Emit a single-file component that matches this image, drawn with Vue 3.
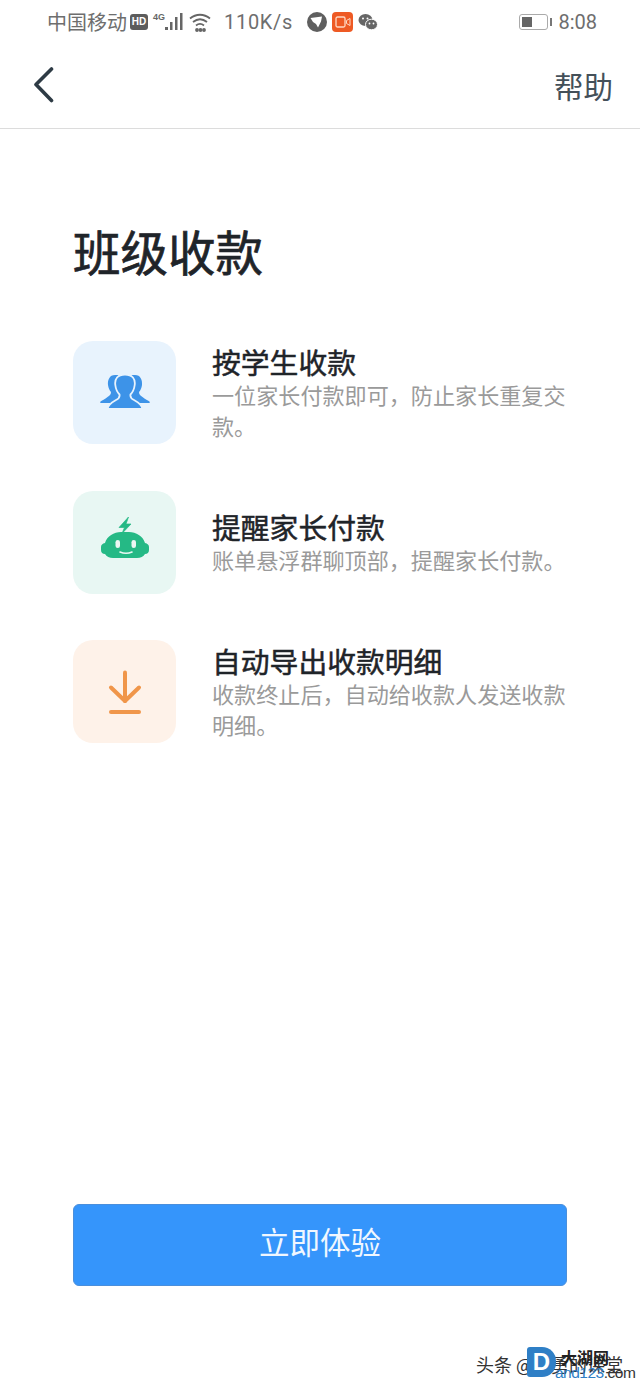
<script setup>
const items = [
  { key: 'blue', title: '按学生收款', desc: '一位家长付款即可，防止家长重复交款。' },
  { key: 'green', title: '提醒家长付款', desc: '账单悬浮群聊顶部，提醒家长付款。' },
  { key: 'orange', title: '自动导出收款明细', desc: '收款终止后，自动给收款人发送收款明细。' }
]
</script>

<template>
  <div class="page">
    <div class="status">
      <div class="status-left">
        <span class="carrier">中国移动</span>
        <span class="hd">HD</span>
        <span class="signal">
          <span class="net">4G</span>
          <svg width="22" height="20" viewBox="0 0 22 20"><g fill="#666"><rect x="0" y="15" width="3" height="3"/><rect x="5" y="10" width="2.500" height="8"/><rect x="10" y="5" width="2.500" height="13"/><rect x="15" y="1" width="2.500" height="17"/></g></svg>
        </span>
        <svg class="wifi" width="24" height="20" viewBox="0 0 24 20" fill="none" stroke="#666" stroke-width="1.800"><path d="M2 6.500C8 1.500 16 1.500 22 6.500"/><path d="M5 10C9.500 6.500 14.500 6.500 19 10"/><path d="M8 13.500C10.500 11.500 13.500 11.500 16 13.500"/><circle cx="9" cy="18" r="1" fill="#666"/><circle cx="12.500" cy="18" r="1" fill="#666"/><circle cx="16" cy="18" r="1" fill="#666"/></svg>
        <span class="speed">110K/s</span>
        <span class="apps">
          <svg width="20" height="20" viewBox="0 0 20 20"><circle cx="10" cy="10" r="10" fill="#5f5f5f"/><path d="M3.500 6L15 4.500L14 9.500L11 15.500L9 12L6 10Z" fill="#fff"/></svg>
          <svg width="21" height="20" viewBox="0 0 21 20"><rect width="21" height="20" rx="4" fill="#ee5a24"/><rect x="4" y="5" width="9" height="10" rx="1.500" fill="none" stroke="#ffd9c4" stroke-width="1.300"/><path d="M14.500 8.500L18 6.500V13.500L14.500 11.500Z" fill="none" stroke="#ffd9c4" stroke-width="1"/></svg>
          <svg width="20" height="18" viewBox="0 0 20 18"><ellipse cx="7.500" cy="7" rx="7" ry="6" fill="#666"/><ellipse cx="13.500" cy="11.500" rx="6" ry="5.300" fill="#666" stroke="#fff" stroke-width="1"/><circle cx="5" cy="5.500" r="1" fill="#fff"/><circle cx="9.500" cy="5.500" r="1" fill="#fff"/><circle cx="11.500" cy="10.500" r=".9" fill="#fff"/><circle cx="15.500" cy="10.500" r=".9" fill="#fff"/></svg>
        </span>
      </div>
      <div class="status-right">
        <span class="battery"><span class="battery-fill"></span></span>
        <span class="battery-tip"></span>
        <span class="time">8:08</span>
      </div>
    </div>

    <header class="nav">
      <svg width="22" height="36" viewBox="0 0 22 36" fill="none" stroke="#2e3b45" stroke-width="3.600" stroke-linecap="round" stroke-linejoin="round"><path d="M18.500 2L3 17.500L18.500 33.500"/></svg>
      <span class="help">帮助</span>
    </header>

    <main class="content">
      <h1 class="title">班级收款</h1>

      <ul class="list">
        <li v-for="item in items" :key="item.key" class="item">
          <div class="tile" :class="item.key">
            <svg v-if="item.key === 'blue'" width="50" height="38" viewBox="0 0 50 38">
              <path d="M15 1C9.500 1 7.500 6 8 11C8.500 14 9.500 16.500 11 18C11 20.500 9.500 21.500 7.500 23C5 25 2 26.500 0 28C0 28.700 .7 29 2 29H25V1Z" fill="#3d93e8"/>
              <path d="M35 1C40.500 1 42.500 6 42 11C41.500 14 40.500 16.500 39 18C39 20.500 40.500 21.500 42.500 23C45 25 48 26.500 50 28C50 28.700 49.300 29 48 29H25V1Z" fill="#3d93e8"/>
              <path d="M25 .5C17.500 .5 14.500 5 15.300 11C15.800 15 17.500 18.500 19.500 20.500C20 23 19 24.500 16 26C11.500 28.500 8 31.500 7.500 35H42.500C42 31.500 38.500 28.500 34 26C31 24.500 30 23 30.500 20.500C32.500 18.500 34.200 15 34.700 11C35.500 5 32.500 .5 25 .5Z" fill="#3d93e8" stroke="#e8f3fd" stroke-width="1.800"/>
            </svg>
            <svg v-else-if="item.key === 'green'" width="48" height="50" viewBox="0 0 48 50">
              <path d="M27.500 0L18 10.500H23.500L21 16.500L30 7H25Z" fill="#25b985" stroke="#25b985" stroke-width=".7"/>
              <path d="M4 26C6 19 13 15 20 15H28C35 15 42 19 44 26C46.500 26.500 48 28 48 30V33C48 35.500 46.500 37 44 37C42.500 39.500 39.500 41 36 41H12C8.500 41 5.500 39.500 4 37C1.500 37 0 35.500 0 33V30C0 28 1.500 26.500 4 26Z" fill="#25b985"/>
              <rect x="14.500" y="23" width="4.500" height="8" rx="2.250" fill="#eaf7f3"/>
              <rect x="30.500" y="23" width="4.500" height="8" rx="2.250" fill="#eaf7f3"/>
              <path d="M19 35C22.500 36.500 27.500 36.500 31 35" fill="none" stroke="#eaf7f3" stroke-width="1.600" stroke-linecap="round"/>
            </svg>
            <svg v-else width="34" height="44" viewBox="0 0 34 44" fill="none" stroke="#f0964a" stroke-width="4" stroke-linecap="round" stroke-linejoin="round">
              <path d="M17 2.500V31"/><path d="M3 17.500L17 31L31 17.500"/><path d="M3 42H31"/>
            </svg>
          </div>
          <div class="text">
            <h2 class="item-title">{{ item.title }}</h2>
            <p class="item-desc">{{ item.desc }}</p>
          </div>
        </li>
      </ul>

      <button class="cta">立即体验</button>
    </main>

    <div class="mark">
      <span class="mark-text">头条 @郭勇的课堂</span>
      <span class="mark-d">D</span>
      <span class="mark-cn">大湖网</span>
      <span class="mark-en">and123<span class="mark-com">.com</span></span>
    </div>
  </div>
</template>

<style>
body { margin: 0; background: #fff; }
</style>

<style scoped>
.page {
  position: relative;
  width: 640px;
  height: 1387px;
  overflow: hidden;
  background: #fff;
  font-family: "Noto Sans CJK SC", "Noto Sans", sans-serif;
}
.status {
  height: 44px;
  padding: 0 43px 0 47px;
  display: flex;
  align-items: center;
  justify-content: space-between;
  color: #6e6e6e;
  font-size: 20px;
}
.status-left, .status-right { display: flex; align-items: center; }
.carrier { font-size: 20px; line-height: 24px; white-space: nowrap; }
.hd {
  margin-left: 3px;
  width: 18px;
  height: 16px;
  border-radius: 3px;
  background: #5c5c5c;
  color: #fff;
  font: 700 10px/16px "Liberation Sans", sans-serif;
  text-align: center;
}
.signal { display: flex; align-items: center; margin-left: 5px; position: relative; padding-left: 12px; }
.net {
  position: absolute;
  left: 0;
  top: 0;
  font: 700 9px/10px "Liberation Sans", sans-serif;
  color: #666;
}
.wifi { margin-left: 1px; }
.speed {
  margin-left: 12px;
  font-family: "Roboto", "Liberation Sans", sans-serif;
  font-size: 20px;
  letter-spacing: .7px;
}
.apps { display: flex; align-items: center; margin-left: 14px; gap: 5px; }
.battery {
  width: 29px;
  height: 16px;
  box-sizing: border-box;
  border: 1.500px solid #aaa;
  border-radius: 3px;
  padding: 2px;
  display: flex;
}
.battery-fill { width: 10px; background: #666; }
.battery-tip { width: 2px; height: 8px; margin-left: 2px; background: #777; }
.time {
  margin-left: 6px;
  font-family: "Roboto", "Liberation Sans", sans-serif;
  font-size: 20px;
}
.nav {
  height: 85px;
  box-sizing: border-box;
  padding: 0 27px 2px 33px;
  border-bottom: 1px solid #dcdcdc;
  display: flex;
  align-items: center;
  justify-content: space-between;
}
.help { font-size: 29.500px; line-height: 40px; color: #445059; }
.content { padding: 0 73px; display: flex; flex-direction: column; }
.title {
  margin: 88px 0 0;
  font-size: 47.500px;
  line-height: 68px;
  font-weight: 400;
  -webkit-text-stroke: .7px #1f2429;
  color: #1f2429;
  white-space: nowrap;
}
.list {
  list-style: none;
  margin: 56px 0 0;
  padding: 0;
  display: flex;
  flex-direction: column;
  gap: 46.500px;
}
.item { display: flex; align-items: center; gap: 36px; }
.tile {
  flex: none;
  width: 103px;
  height: 103px;
  border-radius: 20px;
  display: flex;
  align-items: center;
  justify-content: center;
}
.blue { background: #e8f3fd; }
.green { background: #e8f7f3; }
.orange { background: #fef2e9; }
.text { width: 355px; }
.item-title {
  margin: 0;
  font-size: 28.800px;
  line-height: 34px;
  font-weight: 400;
  -webkit-text-stroke: .5px #1f2429;
  color: #1f2429;
  white-space: nowrap;
}
.item-desc {
  margin: 0;
  font-size: 22.100px;
  line-height: 31px;
  color: #9a9a9a;
}
.cta {
  margin-top: 461px;
  height: 82px;
  border: 1px solid #4a8fdc;
  border-radius: 6px;
  background: #3595fb;
  color: #f0f7ff;
  font-family: inherit;
  font-size: 30.500px;
  padding: 0 0 8px;
}
.mark {
  position: absolute;
  left: 476px;
  top: 1342px;
  width: 164px;
  height: 45px;
}
.mark-text {
  position: absolute;
  left: 0;
  top: 10px;
  font-size: 18px;
  line-height: 24px;
  color: #333;
  white-space: nowrap;
}
.mark-d {
  position: absolute;
  left: 51px;
  top: 5px;
  width: 29px;
  height: 30px;
  border-radius: 3px 14px 14px 3px;
  background: #2f7fc6;
  color: #fff;
  font: 700 24px/30px "Liberation Sans", sans-serif;
  text-align: center;
}
.mark-cn {
  position: absolute;
  left: 85px;
  top: 5px;
  font-size: 16px;
  line-height: 20px;
  font-weight: 700;
  color: #222;
  white-space: nowrap;
}
.mark-en {
  position: absolute;
  left: 79px;
  top: 21px;
  font: 15.500px/20px "Liberation Sans", sans-serif;
  letter-spacing: -.5px;
  color: #2f7fc6;
  white-space: nowrap;
}
.mark-com { color: #333; }
</style>
